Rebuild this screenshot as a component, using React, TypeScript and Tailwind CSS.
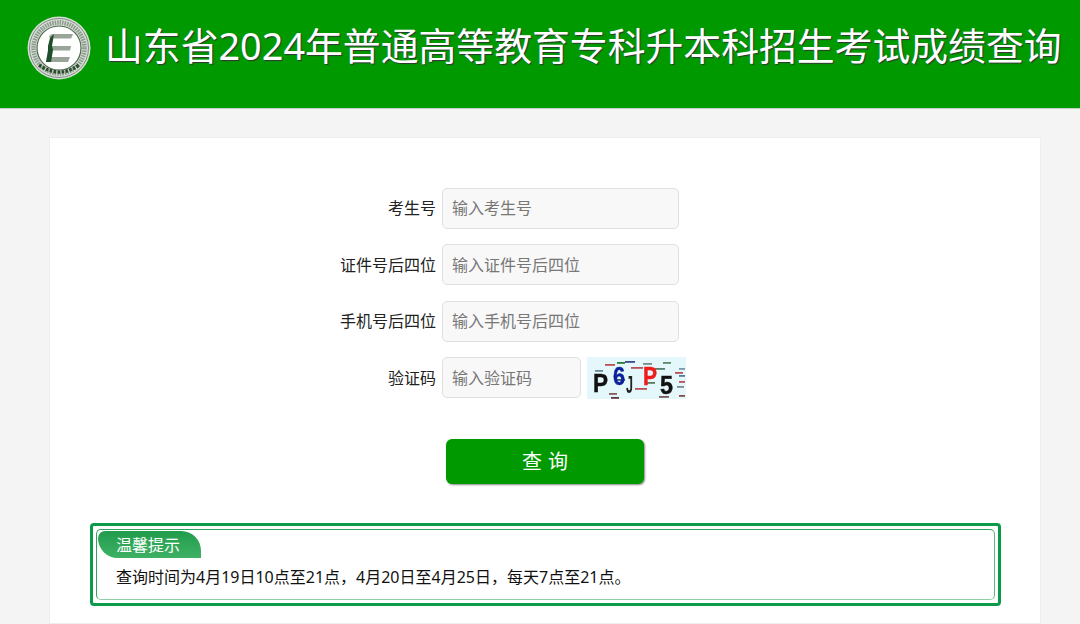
const FONT = "font-['Noto_Sans','Noto_Sans_CJK_SC',sans-serif]";

function Logo() {
  return (
    <svg width="64" height="64" viewBox="0 0 64 64" className="shrink-0 blur-[0.3px]">
      <circle cx="32" cy="32" r="31.5" fill="#d6dcd6" />
      <circle cx="32" cy="32" r="29.5" fill="none" stroke="#7f917f" strokeWidth="1" />
      <circle cx="32" cy="32" r="25.5" fill="none" stroke="#8b9a8b" strokeWidth="4.5" strokeDasharray="1.5 1" />
      <circle cx="32" cy="32" r="22" fill="#ffffff" stroke="#4b6b4b" strokeWidth="1.2" />
      <path d="M22 20L25 18H46L44 22.5H23Z" fill="#98a598" />
      <path d="M22 30H44L43 34.5H21Z" fill="#98a598" />
      <path d="M20 41H43L41 46H19Z" fill="#98a598" />
      <path d="M23 22L27 18L25 30L26 34L24 46L19 46L21 34L21 30Z" fill="#1f4f2a" />
      <path d="M12 49Q32 63 52 49" fill="none" stroke="#2c4a2c" strokeWidth="3.4" strokeDasharray="2.5 1.5" />
    </svg>
  );
}

function Captcha() {
  const dashes: [number, number, number, string][] = [
    [18, 7, 10, "#b9505a"], [30, 5, 8, "#2a7a3a"], [38, 4, 10, "#3a4a8a"], [56, 6, 9, "#7a8a8a"], [76, 5, 8, "#5a8a6a"],
    [8, 13, 8, "#6a8a9a"], [44, 10, 12, "#b9505a"], [68, 11, 10, "#5a7a6a"], [92, 11, 6, "#7a9aaa"],
    [88, 15, 8, "#b9505a"], [92, 18, 6, "#5a7a9a"], [92, 24, 6, "#b9505a"], [90, 29, 7, "#7a8a8a"],
    [22, 36, 8, "#8a5a5a"], [48, 31, 12, "#b9505a"], [60, 25, 8, "#5a7a5a"], [72, 39, 10, "#7a5a5a"],
    [24, 40, 8, "#5a3a3a"], [92, 38, 6, "#8a4a4a"], [30, 22, 8, "#3a5a7a"],
  ];
  return (
    <svg width="99" height="42" viewBox="0 0 99 42" className="shrink-0">
      <rect width="99" height="42" fill="#e4f8fb" />
      <g className="blur-[0.4px]">
        {dashes.map(([x, y, w, c], i) => (
          <rect key={i} x={x} y={y} width={w} height="1.8" fill={c} />
        ))}
        <g fontFamily="'Liberation Sans',sans-serif" fontWeight="700" strokeWidth="0.5">
          <text x="6" y="35" fontSize="26" fill="#111111" stroke="#111111" textLength="15" lengthAdjust="spacingAndGlyphs">P</text>
          <text x="26" y="28" fontSize="25" fill="#0a1f9a" stroke="#0a1f9a" textLength="12" lengthAdjust="spacingAndGlyphs">6</text>
          <text x="39" y="36" fontSize="24" fill="#222222" textLength="7" lengthAdjust="spacingAndGlyphs">J</text>
          <text x="56" y="28" fontSize="25" fill="#ee1c1c" stroke="#ee1c1c" textLength="14" lengthAdjust="spacingAndGlyphs">P</text>
          <text x="73" y="37" fontSize="26" fill="#111111" stroke="#111111" textLength="13" lengthAdjust="spacingAndGlyphs">5</text>
        </g>
      </g>
    </svg>
  );
}

function Row({ label, ph, narrow, children }: { label: string; ph: string; narrow?: boolean; children?: React.ReactNode }) {
  return (
    <div className="flex items-center h-[41px]">
      <label className="w-[146px] text-right text-[16px] text-[#222222] pr-[6px] leading-none">{label}</label>
      <input
        placeholder={ph}
        className={`${narrow ? "w-[139px]" : "w-[237px]"} h-[41px] rounded-[5px] border border-[#e0e0e0] bg-[#f8f8f8] pl-[9px] text-[16px] placeholder:text-[#777777] outline-none`}
      />
      {children}
    </div>
  );
}

export default function App() {
  return (
    <div className={`${FONT} h-[624px] overflow-hidden bg-[#f4f4f4]`}>
      <header className="h-[109px] bg-[#009900] border-b border-[#c4cfc4] flex items-start pl-[27px] pt-[16px]">
        <Logo />
        <h1 className="ml-[14px] mt-[5px] text-[37.85px] leading-[50px] text-white whitespace-nowrap [text-shadow:1px_1px_1px_#333333]">
          山东省2024年普通高等教育专科升本科招生考试成绩查询
        </h1>
      </header>

      <main className="ml-[49px] mt-[28px] w-[992px] h-[487px] bg-white border border-[#eeeeee] pt-[49.5px]">
        <div className="ml-[246px] flex flex-col gap-[15.5px]">
          <Row label="考生号" ph="输入考生号" />
          <Row label="证件号后四位" ph="输入证件号后四位" />
          <Row label="手机号后四位" ph="输入手机号后四位" />
          <Row label="验证码" ph="输入验证码" narrow>
            <div className="ml-[6px] mt-[1px]">
              <Captcha />
            </div>
          </Row>
        </div>

        <div className="mt-[40.5px] ml-[396px]">
          <button className="w-[198px] h-[45px] rounded-[6px] bg-[#009900] text-white text-[20px] tracking-[6px] pl-[6px] pt-[1px] shadow-[1px_1px_2px_#888888]">
            查询
          </button>
        </div>

        <section className="mt-[39px] ml-[40px] w-[911px] h-[83px] rounded-[4px] border-[3px] border-[#0a9a4a] p-[3px]">
          <div className="h-[71px] rounded-[5px] border border-[#2fa35c] border-b-[#8fcfa5] border-r-[#5fb97f] pt-[1px] pl-[1px]">
            <div className="w-[103px] h-[27px] rounded-tl-[8px] rounded-tr-[22px] rounded-bl-[22px] bg-gradient-to-b from-[#1f9d4c] to-[#3eb064] text-white text-[16px] leading-[28px] pl-[18px]">
              温馨提示
            </div>
            <p className="mt-[7px] ml-[18px] text-[16px] leading-[24px] text-[#111111]">
              查询时间为4月19日10点至21点，4月20日至4月25日，每天7点至21点。
            </p>
          </div>
        </section>
      </main>
    </div>
  );
}
